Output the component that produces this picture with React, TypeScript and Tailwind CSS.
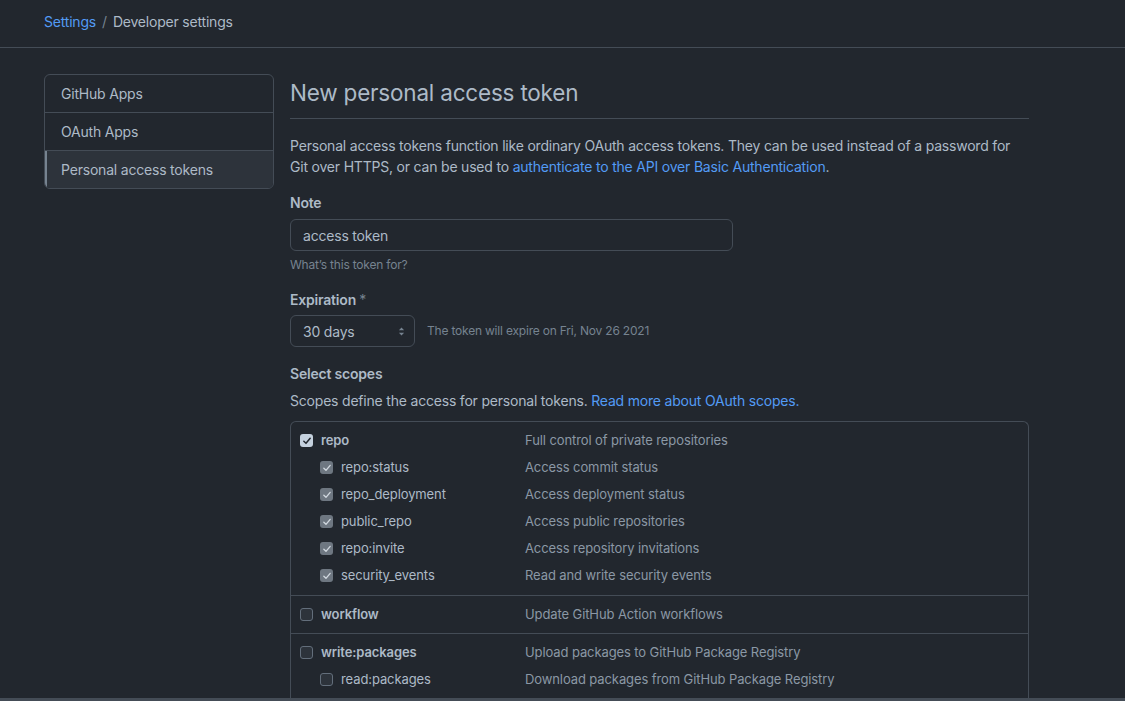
import React from "react";

function Check({ state }: { state: "on" | "sub" | "off" }) {
  if (state === "on") {
    return (
      <span className="flex h-[13px] w-[13px] items-center justify-center rounded-[3px] bg-[#c5d1de]">
        <svg viewBox="0 0 12 12" className="h-[10px] w-[10px]">
          <path d="M2.2 6.3 L4.8 8.8 L9.8 2.8" fill="none" stroke="#22272e" strokeWidth="1.8" strokeLinecap="round" strokeLinejoin="round" />
        </svg>
      </span>
    );
  }
  if (state === "sub") {
    return (
      <span className="flex h-[13px] w-[13px] items-center justify-center rounded-[3px] bg-[#6e7781]">
        <svg viewBox="0 0 12 12" className="h-[10px] w-[10px]">
          <path d="M2.2 6.3 L4.8 8.8 L9.8 2.8" fill="none" stroke="#d0d7de" strokeWidth="1.6" strokeLinecap="round" strokeLinejoin="round" />
        </svg>
      </span>
    );
  }
  return <span className="block h-[13px] w-[13px] rounded-[3px] border border-[#636e7b] bg-[#2d333b]" />;
}

function ScopeRow({
  name,
  desc,
  state,
  sub,
}: {
  name: string;
  desc: string;
  state: "on" | "sub" | "off";
  sub?: boolean;
}) {
  return (
    <div className="flex h-[27px] items-center text-[13px] tracking-[-0.1px]">
      <div className={`flex w-[234px] items-center ${sub ? "pl-[29px]" : "pl-[9px]"}`}>
        <Check state={state} />
        <span className={`ml-[8px] ${sub ? "" : "font-semibold"} text-[#adbac7]`}>{name}</span>
      </div>
      <span className="text-[#8b98a5]">{desc}</span>
    </div>
  );
}

export default function App() {
  return (
    <div
      className="relative h-[701px] w-[1125px] overflow-hidden bg-[#22272e] text-[14px] tracking-[-0.2px] text-[#adbac7]"
      style={{ fontFamily: "Inter, 'Noto Sans', 'Liberation Sans', sans-serif" }}
    >
      <div className="flex h-[48px] items-center border-b border-[#444c56] pl-[44px] pb-[4px] text-[14px]">
        <span className="text-[#539bf5]">Settings</span>
        <span className="mx-[6px] text-[#768390]">/</span>
        <span>Developer settings</span>
      </div>

      <div className="flex pl-[44px] pt-[26px]">
        <div className="w-[230px] shrink-0">
          <div className="overflow-hidden rounded-[6px] border border-[#444c56]">
            <div className="flex h-[38px] items-center border-b border-[#444c56] pl-[16px]">GitHub Apps</div>
            <div className="flex h-[38px] items-center border-b border-[#444c56] pl-[16px]">OAuth Apps</div>
            <div className="flex h-[37px] items-center border-l-2 border-[#768390] bg-[#2d333b] pl-[14px]">
              Personal access tokens
            </div>
          </div>
        </div>

        <div className="ml-[16px] w-[739px]">
          <div className="border-b border-[#444c56] pb-[7px]">
            <h1 className="pt-[1px] text-[22.5px] leading-[36px] text-[#adbac7]">New personal access token</h1>
          </div>
          <p className="mt-[16px] leading-[21px]">
            Personal access tokens function like ordinary OAuth access tokens. They can be used instead of a password for
            Git over HTTPS, or can be used to{" "}
            <span className="text-[#539bf5]">authenticate to the API over Basic Authentication</span>.
          </p>

          <div className="mt-[15px] font-semibold">Note</div>
          <div className="mt-[6px] flex h-[32px] w-[443px] items-center rounded-[6px] border border-[#444c56] bg-[#22272e] pl-[12px]">
            access token
          </div>
          <div className="mt-[5px] text-[12px] text-[#768390]">What’s this token for?</div>

          <div className="mt-[15px] font-semibold">
            Expiration <span className="font-normal text-[#768390]">*</span>
          </div>
          <div className="mt-[5px] flex items-center">
            <div className="flex h-[32px] w-[125px] items-center justify-between rounded-[6px] border border-[#444c56] pl-[12px] pr-[9px]">
              <span>30 days</span>
              <svg viewBox="0 0 8 12" className="h-[11px] w-[7px]">
                <path d="M1 4.5 L4 1.5 L7 4.5 Z M1 7.5 L4 10.5 L7 7.5 Z" fill="#768390" />
              </svg>
            </div>
            <span className="ml-[12px] text-[12px] text-[#768390]">The token will expire on Fri, Nov 26 2021</span>
          </div>

          <div className="mt-[16px] font-semibold">Select scopes</div>
          <div className="mt-[6px]">
            Scopes define the access for personal tokens.{" "}
            <span className="text-[#539bf5]">Read more about OAuth scopes.</span>
          </div>

          <div className="mt-[10px] rounded-t-[6px] border border-b-0 border-[#444c56]">
            <div className="border-b border-[#444c56] pt-[5px] pb-[6px]">
              <ScopeRow name="repo" desc="Full control of private repositories" state="on" />
              <ScopeRow name="repo:status" desc="Access commit status" state="sub" sub />
              <ScopeRow name="repo_deployment" desc="Access deployment status" state="sub" sub />
              <ScopeRow name="public_repo" desc="Access public repositories" state="sub" sub />
              <ScopeRow name="repo:invite" desc="Access repository invitations" state="sub" sub />
              <ScopeRow name="security_events" desc="Read and write security events" state="sub" sub />
            </div>
            <div className="border-b border-[#444c56] py-[5px]">
              <ScopeRow name="workflow" desc="Update GitHub Action workflows" state="off" />
            </div>
            <div className="pt-[5px] pb-[6px]">
              <ScopeRow name="write:packages" desc="Upload packages to GitHub Package Registry" state="off" />
              <ScopeRow name="read:packages" desc="Download packages from GitHub Package Registry" state="off" sub />
            </div>
          </div>
        </div>
      </div>

      <div className="absolute bottom-0 left-0 h-[3px] w-full bg-[#444c56]" />
    </div>
  );
}
